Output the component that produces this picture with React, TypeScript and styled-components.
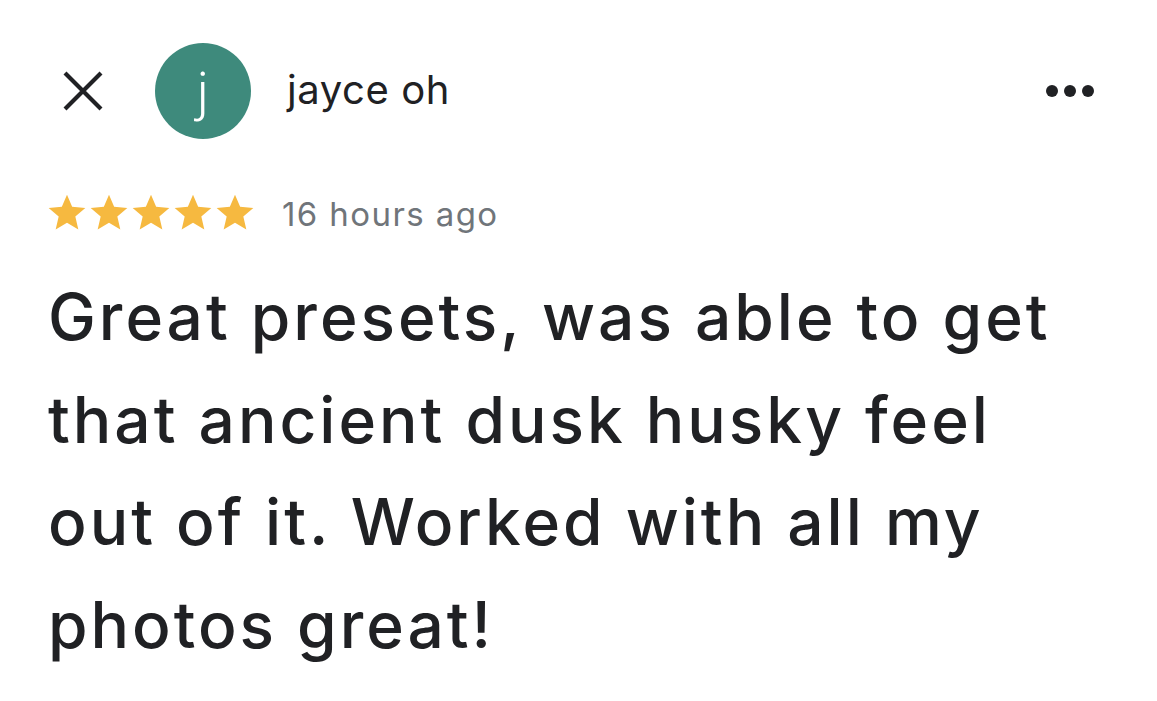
import React from "react";
import styled, { createGlobalStyle } from "styled-components";

const GlobalStyle = createGlobalStyle`
  html, body {
    margin: 0;
    padding: 0;
    background: #ffffff;
  }
  body {
    font-family: Inter, "Open Sans", Roboto, sans-serif;
    color: #202124;
  }
`;

const Page = styled.div`
  width: 1157px;
  height: 701px;
  overflow: hidden;
  background: #fff;
  display: flex;
  flex-direction: column;
`;

const Header = styled.div`
  display: flex;
  align-items: center;
  padding: 43px 63px 0 62px;
`;

const CloseButton = styled.button`
  width: 42px;
  height: 42px;
  padding: 0;
  margin-right: 51px;
  border: none;
  background: none;
  display: flex;
  align-items: center;
  justify-content: center;
  color: #202124;
`;

const Avatar = styled.div`
  width: 96px;
  height: 96px;
  border-radius: 50%;
  background: #3e8a7c;
  color: #fff;
  display: flex;
  align-items: center;
  justify-content: center;
  font-family: Roboto, Inter, sans-serif;
  font-weight: 300;
  font-size: 54px;
  margin-right: 36px;
`;

const Name = styled.div`
  font-family: Inter, Roboto, sans-serif;
  font-size: 40px;
  font-weight: 400;
  color: #202124;
  letter-spacing: 0.6px;
  flex: 1;
  margin-top: -3px;
`;

const MoreDots = styled.div`
  display: flex;
  gap: 6px;
`;

const Dot = styled.span`
  width: 12px;
  height: 12px;
  border-radius: 50%;
  background: #202124;
`;

const MetaRow = styled.div`
  display: flex;
  align-items: center;
  padding-left: 46px;
  margin-top: 52px;
`;

const Stars = styled.div`
  display: flex;
  margin-right: 26px;
`;

const Time = styled.span`
  font-family: Inter, Roboto, sans-serif;
  font-size: 33px;
  color: #70757a;
  letter-spacing: 1.4px;
  margin-top: 2px;
`;

const Review = styled.p`
  margin: 31px 0 0 48px;
  font-family: Inter, "Open Sans", sans-serif;
  font-size: 64px;
  line-height: 102.5px;
  font-weight: 500;
  color: #202124;
  letter-spacing: 3px;
`;

const Line = styled.span`
  display: block;
  white-space: nowrap;
`;

const StarIcon = styled.svg`
  width: 44px;
  height: 44px;
  margin: 0 -1px;
`;

const Star = () => (
  <StarIcon viewBox="0 0 24 24">
    <path
      fill="#f6b940"
      d="M12 17.27L18.18 21l-1.64-7.03L22 9.24l-7.19-.61L12 2 9.19 8.63 2 9.24l5.46 4.73L5.82 21z"
    />
  </StarIcon>
);

const lines = [
  "Great presets, was able to get",
  "that ancient dusk husky feel",
  "out of it. Worked with all my",
  "photos great!",
];

export default function App() {
  return (
    <>
      <GlobalStyle />
      <Page>
        <Header>
          <CloseButton aria-label="Close">
            <svg width="42" height="42" viewBox="0 0 42 42">
              <path
                d="M3 3 L39 39 M39 3 L3 39"
                stroke="#202124"
                strokeWidth="4.2"
                strokeLinecap="butt"
              />
            </svg>
          </CloseButton>
          <Avatar>j</Avatar>
          <Name>jayce oh</Name>
          <MoreDots>
            <Dot />
            <Dot />
            <Dot />
          </MoreDots>
        </Header>
        <MetaRow>
          <Stars>
            {[0, 1, 2, 3, 4].map((i) => (
              <Star key={i} />
            ))}
          </Stars>
          <Time>16 hours ago</Time>
        </MetaRow>
        <Review>
          {lines.map((l) => (
            <Line key={l}>{l}</Line>
          ))}
        </Review>
      </Page>
    </>
  );
}
